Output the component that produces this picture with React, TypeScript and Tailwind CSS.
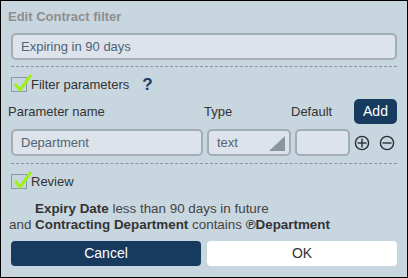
import { Fragment } from "react";

const font = "font-['Liberation_Sans',Arial,sans-serif]";

function Check({ checked }: { checked: boolean }) {
  return (
    <span className="relative inline-block h-[15px] w-[16px] shrink-0 border border-[#8b99a6] bg-[#c8d5df]">
      {checked && (
        <svg
          className="absolute left-[1px] top-[-5px]"
          width="19"
          height="20"
          viewBox="0 0 19 20"
        >
          <path d="M2 11 L7 17 L18 2" fill="none" stroke="#9ef01a" strokeWidth="3" strokeLinejoin="round" />
        </svg>
      )}
    </span>
  );
}

function CircleIcon({ plus }: { plus: boolean }) {
  return (
    <svg width="16" height="16" viewBox="0 0 16 16">
      <circle cx="8" cy="8" r="6.6" fill="none" stroke="#2b2f36" strokeWidth="1.4" />
      <path d="M3.5 8 H12.5" stroke="#2b2f36" strokeWidth="1.4" />
      {plus && <path d="M8 3.5 V12.5" stroke="#2b2f36" strokeWidth="1.4" />}
    </svg>
  );
}

const field =
  "h-[27px] rounded-[5px] border-2 border-[#a2adb6] bg-[#dce3ea] px-2 text-[13px] text-[#506377] flex items-center";

export default function App() {
  const params = [{ name: "Department", type: "text", def: "" }];
  return (
    <div className={`${font} h-[278px] w-[408px] border border-black bg-[#c8d6e0] px-[10px] pt-[7px]`}>
      <h2 className="-ml-[3px] text-[13px] font-bold leading-[17px] text-[#8e8e8e]">Edit Contract filter</h2>

      <div className={`${field} mt-[8px] pl-[8px]`}>Expiring in 90 days</div>

      <div className="mt-[6px] border-t border-dashed border-[#8b949c]" />

      <div className="mt-[10px] flex h-[15px] items-center gap-[4px]">
        <Check checked />
        <span className="text-[13px] text-[#333]">Filter parameters</span>
        <span className="ml-[9px] text-[17px] font-bold leading-none text-[#1b3a63]">?</span>
      </div>

      <div className="mt-[7px] flex h-[25px] items-center text-[13px] text-[#333]">
        <span className="-ml-[3px] w-[196px]">Parameter name</span>
        <span className="w-[87px]">Type</span>
        <span className="w-[63px]">Default</span>
        <button className="h-[25px] w-[43px] rounded-[5px] bg-[#173a5f] text-[14px] text-white">Add</button>
      </div>

      {params.map((p) => (
        <Fragment key={p.name}>
          <div className="mt-[5px] flex items-center">
            <div className={`${field} w-[192px]`}>{p.name}</div>
            <div className={`${field} relative ml-[4px] w-[84px]`}>
              {p.type}
              <svg className="absolute right-[4px] bottom-[3px]" width="16" height="15" viewBox="0 0 16 15">
                <path d="M16 0 V15 H0 Z" fill="#8a969e" />
              </svg>
            </div>
            <div className={`${field} ml-[4px] w-[55px]`}>{p.def}</div>
            <div className="ml-[4px] flex gap-[9px]">
              <CircleIcon plus />
              <CircleIcon plus={false} />
            </div>
          </div>
        </Fragment>
      ))}

      <div className="mt-[7px] border-t border-dashed border-[#8b949c]" />

      <div className="mt-[10px] flex h-[15px] items-center gap-[4px]">
        <Check checked />
        <span className="text-[13px] text-[#333]">Review</span>
      </div>

      <div className="mt-[12px] text-[13.4px] leading-[16px] text-[#444]">
        <div className="pl-[24px]">
          <b className="text-[#333]">Expiry Date</b> less than 90 days in future
        </div>
        <div className="-ml-[2px]">
          and <b className="text-[#333]">Contracting Department</b> contains <b className="text-[#333]">℗Department</b>
        </div>
      </div>

      <div className="mt-[8px] grid grid-cols-2 gap-[6px]">
        <button className="h-[25px] rounded-[4px] bg-[#173a5f] text-[14px] text-white">Cancel</button>
        <button className="h-[25px] rounded-[4px] bg-white text-[14px] text-[#333]">OK</button>
      </div>
    </div>
  );
}
